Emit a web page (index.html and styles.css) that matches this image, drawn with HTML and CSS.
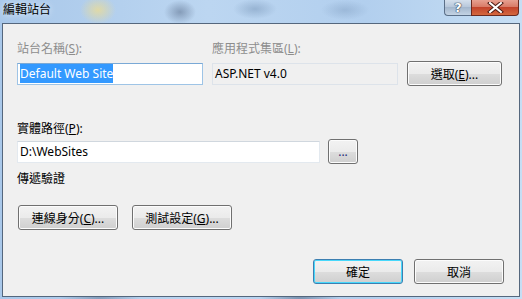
FILE: index.html
```html
<!DOCTYPE html>
<html lang="zh-Hant">
<head>
  <meta charset="UTF-8">
  <title>編輯站台</title>
  <link rel="stylesheet" href="styles.css">
</head>
<body>
  <div class="window">
    <div class="titlebar">
      <span class="title">編輯站台</span>
      <div class="caption-buttons">
        <div class="cap help">?</div>
        <div class="cap close">
          <svg width="17" height="11" viewBox="0 0 17 11">
            <path d="M3 1 L14 10 M14 1 L3 10" stroke="#4a1a12" stroke-width="4" stroke-linecap="square"/>
            <path d="M3 1 L14 10 M14 1 L3 10" stroke="#fff" stroke-width="2" stroke-linecap="square"/>
          </svg>
        </div>
      </div>
    </div>

    <div class="client">
      <!-- site name / app pool -->
      <div class="site-grid">
        <label class="lbl disabled">站台名稱(<u>S</u>):</label>
        <label class="lbl disabled">應用程式集區(<u>L</u>):</label>
        <span></span>
        <div class="field focus"><span class="sel">Default Web Site</span></div>
        <div class="field readonly">ASP.NET v4.0</div>
        <button class="btn">選取(<u>E</u>)...</button>
      </div>

      <!-- physical path -->
      <label class="lbl path-lbl">實體路徑(<u>P</u>):</label>
      <div class="path-row">
        <div class="field path">D:\WebSites</div>
        <button class="btn dots">...</button>
      </div>

      <div class="lbl auth-lbl">傳遞驗證</div>
      <div class="auth-row">
        <button class="btn wide">連線身分(<u>C</u>)...</button>
        <button class="btn wide">測試設定(<u>G</u>)...</button>
      </div>

      <div class="footer">
        <button class="btn ok">確定</button>
        <button class="btn">取消</button>
      </div>
    </div>
  </div>
</body>
</html>
```

FILE: styles.css
```css
body {
  margin: 0;
  font-family: "Noto Sans", "Noto Sans CJK TC", sans-serif;
  font-size: 12px;
}

.window {
  width: 522px;
  height: 299px;
  overflow: hidden;
  background:
    radial-gradient(ellipse 18px 14px at 98px 10px, rgba(235, 220, 150, 0.8), transparent),
    radial-gradient(ellipse 16px 12px at 180px 12px, rgba(90, 110, 140, 0.55), transparent),
    radial-gradient(ellipse 22px 10px at 255px 9px, rgba(110, 140, 175, 0.45), transparent),
    radial-gradient(ellipse 24px 10px at 345px 10px, rgba(120, 150, 185, 0.4), transparent),
    radial-gradient(ellipse 40px 6px at 300px 298px, rgba(60, 80, 110, 0.5), transparent),
    radial-gradient(ellipse 40px 6px at 100px 298px, rgba(60, 80, 110, 0.4), transparent),
    linear-gradient(90deg, #a9c8ea 0%, #bcd6f1 40%, #b2cfee 70%, #c6def4 100%);
}

.titlebar {
  height: 23px;
  display: flex;
  justify-content: space-between;
  align-items: flex-start;
}

.title {
  padding: 2px 0 0 3px;
  color: #000;
  text-shadow: 0 0 6px rgba(255, 255, 255, 0.9);
  line-height: 16px;
}

.caption-buttons {
  display: flex;
  margin-right: 3px;
  margin-top: -1px;
}

.cap {
  height: 16px;
  display: flex;
  align-items: center;
  justify-content: center;
  border: 1px solid #5b6f88;
  border-top: none;
}

.help {
  width: 26px;
  border-right: none;
  border-radius: 0 0 0 4px;
  background: linear-gradient(#d8e3ef, #b7c7da 50%, #a3b6cc 51%, #c3d3e4);
  color: #fff;
  font-weight: bold;
  font-size: 13px;
  font-family: "DejaVu Sans", sans-serif;
  text-shadow: 0 0 1px #2a3a50, 0 0 1px #2a3a50, 0 0 1px #2a3a50;
}

.close {
  width: 46px;
  border-radius: 0 0 4px 0;
  border-color: #6a2a20;
  background: linear-gradient(#e9a697, #d87a66 50%, #c2422b 51%, #d4683f);
}

.client {
  height: 272px;
  margin: 0 2px 0 2px;
  border: 1px solid #55677d;
  background: #f0f0f0;
  padding: 17px 15px 0 14px;
  box-sizing: border-box;
  height: 274px;
}

.lbl {
  display: block;
  line-height: 15px;
  color: #000;
}

.disabled {
  color: #8d8d8d;
}

.site-grid {
  display: grid;
  grid-template-columns: 186px 186px 95px;
  column-gap: 9px;
  row-gap: 5px;
  align-items: center;
}

.field {
  height: 22px;
  box-sizing: border-box;
  border: 1px solid #abadb3;
  border-top-color: #8e9aa6;
  background: #fff;
  padding: 0 2px;
  line-height: 20px;
  white-space: nowrap;
  overflow: hidden;
}

.focus {
  border-color: #9ec4e6;
  border-top-color: #7aa9d6;
}

.sel {
  background: #3399ff;
  color: #fff;
  padding: 1px 0;
}

.readonly {
  border-color: #dde3ea;
  background: #f0f0f0;
}

.btn {
  height: 25px;
  box-sizing: border-box;
  border: 1px solid #707070;
  border-radius: 3px;
  background: linear-gradient(#f2f2f2, #ebebeb 50%, #dddddd 51%, #cfcfcf);
  box-shadow: inset 0 0 0 1px #fcfcfc;
  font: inherit;
  color: #000;
  padding: 0;
}

.btn u {
  text-decoration: underline;
}

.path-lbl {
  margin-top: 35px;
}

.path-row {
  display: flex;
  align-items: center;
  gap: 8px;
  margin-top: 3px;
}

.path {
  width: 303px;
  border-color: #e3e9ef;
  border-top-color: #d0d7de;
}

.dots {
  width: 30px;
  color: #2a2a7a;
}

.auth-lbl {
  margin-top: 7px;
}

.auth-row {
  display: flex;
  gap: 14px;
  margin-top: 19px;
  padding-left: 1px;
}

.wide {
  width: 100px;
}

.footer {
  display: flex;
  justify-content: flex-end;
  gap: 11px;
  margin-top: 29px;
}

.footer .btn {
  width: 90px;
}

.ok {
  border-color: #3c7fb1;
  box-shadow: inset 0 0 0 1px #48d8fb;
}
```
